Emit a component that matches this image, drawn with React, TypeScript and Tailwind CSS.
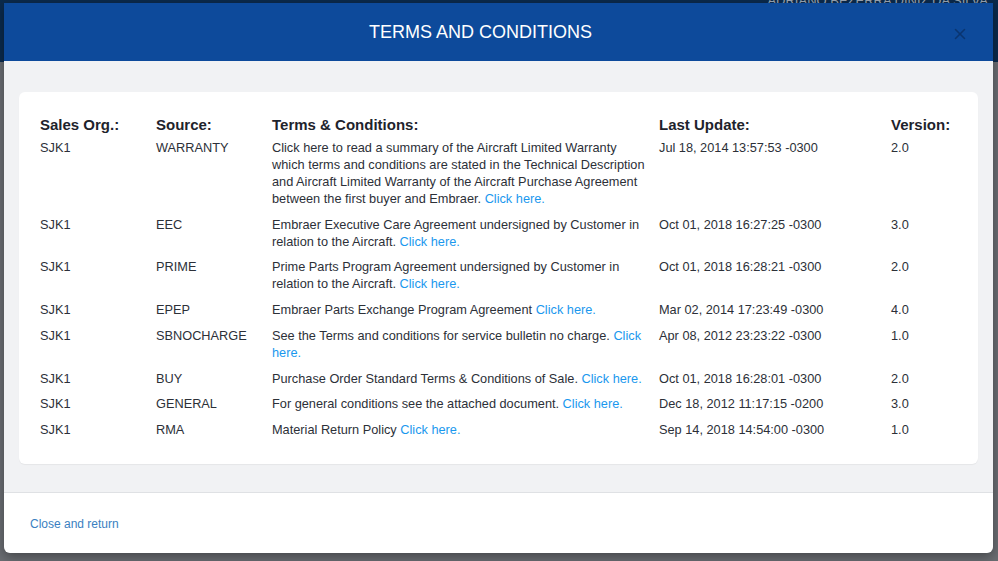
import { X } from 'lucide-react';

type Row = {
  org: string;
  source: string;
  text: string;
  updated: string;
  version: string;
};

const rows: Row[] = [
  {
    org: 'SJK1',
    source: 'WARRANTY',
    text: 'Click here to read a summary of the Aircraft Limited Warranty which terms and conditions are stated in the Technical Description and Aircraft Limited Warranty of the Aircraft Purchase Agreement between the first buyer and Embraer.',
    updated: 'Jul 18, 2014 13:57:53 -0300',
    version: '2.0',
  },
  {
    org: 'SJK1',
    source: 'EEC',
    text: 'Embraer Executive Care Agreement undersigned by Customer in relation to the Aircraft.',
    updated: 'Oct 01, 2018 16:27:25 -0300',
    version: '3.0',
  },
  {
    org: 'SJK1',
    source: 'PRIME',
    text: 'Prime Parts Program Agreement undersigned by Customer in relation to the Aircraft.',
    updated: 'Oct 01, 2018 16:28:21 -0300',
    version: '2.0',
  },
  {
    org: 'SJK1',
    source: 'EPEP',
    text: 'Embraer Parts Exchange Program Agreement',
    updated: 'Mar 02, 2014 17:23:49 -0300',
    version: '4.0',
  },
  {
    org: 'SJK1',
    source: 'SBNOCHARGE',
    text: 'See the Terms and conditions for service bulletin no charge.',
    updated: 'Apr 08, 2012 23:23:22 -0300',
    version: '1.0',
  },
  {
    org: 'SJK1',
    source: 'BUY',
    text: 'Purchase Order Standard Terms & Conditions of Sale.',
    updated: 'Oct 01, 2018 16:28:01 -0300',
    version: '2.0',
  },
  {
    org: 'SJK1',
    source: 'GENERAL',
    text: 'For general conditions see the attached document.',
    updated: 'Dec 18, 2012 11:17:15 -0200',
    version: '3.0',
  },
  {
    org: 'SJK1',
    source: 'RMA',
    text: 'Material Return Policy',
    updated: 'Sep 14, 2018 14:54:00 -0300',
    version: '1.0',
  },
];

export default function App() {
  return (
    <div
      className="relative w-[998px] h-[561px] overflow-hidden bg-[#6a6d72]"
      style={{ fontFamily: '"Liberation Sans", Arial, sans-serif' }}
    >
      {/* page behind the backdrop */}
      <div className="h-[62px] bg-[#0b2a4c] flex justify-end pr-[10px] overflow-hidden">
        <span className="text-[13px] text-[#9aa6b4] leading-none -mt-[6px] whitespace-nowrap">ADRIANO BEZERRA DINIZ DA SILVA</span>
      </div>

      {/* Modal */}
      <div className="absolute left-[4px] top-[3px] w-[989px] h-[550px] flex flex-col rounded-b-[6px] overflow-hidden shadow-[0_4px_12px_rgba(0,0,0,0.35)]">
        {/* Header */}
        <div className="h-[58px] bg-[#0d4a9b] flex items-center relative shrink-0">
          <h1 className="flex-1 text-center text-white text-[18px] pr-[36px]">
            TERMS AND CONDITIONS
          </h1>
          <button className="absolute right-[24px] top-[22px] text-[#0a3570]">
            <X size={18} strokeWidth={2} />
          </button>
        </div>

        {/* Body */}
        <div className="flex-1 bg-[#f1f2f4] pt-[31px] px-[15px]">
          <div className="bg-white rounded-[6px] pt-[22px] pb-[22px] pl-[21px] pr-[20px] shadow-[0_1px_1px_rgba(0,0,0,0.05)]">
            <table className="w-full table-fixed border-collapse text-[12.75px] text-[#2c3038]">
              <colgroup>
                <col className="w-[116px]" />
                <col className="w-[116px]" />
                <col className="w-[387px]" />
                <col className="w-[232px]" />
                <col />
              </colgroup>
              <thead>
                <tr className="text-left text-[15px] leading-[16px] font-bold text-[#1e232c]">
                  <th className="pt-[3px] pb-[1px] font-bold">Sales Org.:</th>
                  <th className="pt-[3px] pb-[1px] font-bold">Source:</th>
                  <th className="pt-[3px] pb-[1px] font-bold">Terms &amp; Conditions:</th>
                  <th className="pt-[3px] pb-[1px] font-bold">Last Update:</th>
                  <th className="pt-[3px] pb-[1px] font-bold">Version:</th>
                </tr>
              </thead>
              <tbody>
                {rows.map((r, i) => (
                  <tr key={i} className="align-top leading-[17px]">
                    <td className="pt-[4.75px] pb-[4px]">{r.org}</td>
                    <td className="pt-[4.75px] pb-[4px]">{r.source}</td>
                    <td className="pt-[4.75px] pb-[4px] pr-[10px]">
                      {r.text} <a className="text-[#1a98ee] cursor-pointer">Click here.</a>
                    </td>
                    <td className="pt-[4.75px] pb-[4px]">{r.updated}</td>
                    <td className="pt-[4.75px] pb-[4px]">{r.version}</td>
                  </tr>
                ))}
              </tbody>
            </table>
          </div>
        </div>

        {/* Footer */}
        <div className="h-[61px] shrink-0 bg-white border-t border-[#dfe1e4] flex items-center px-[26px]">
          <a className="text-[12px] text-[#3a7fc1] cursor-pointer pt-[2px]">Close and return</a>
        </div>
      </div>
    </div>
  );
}
